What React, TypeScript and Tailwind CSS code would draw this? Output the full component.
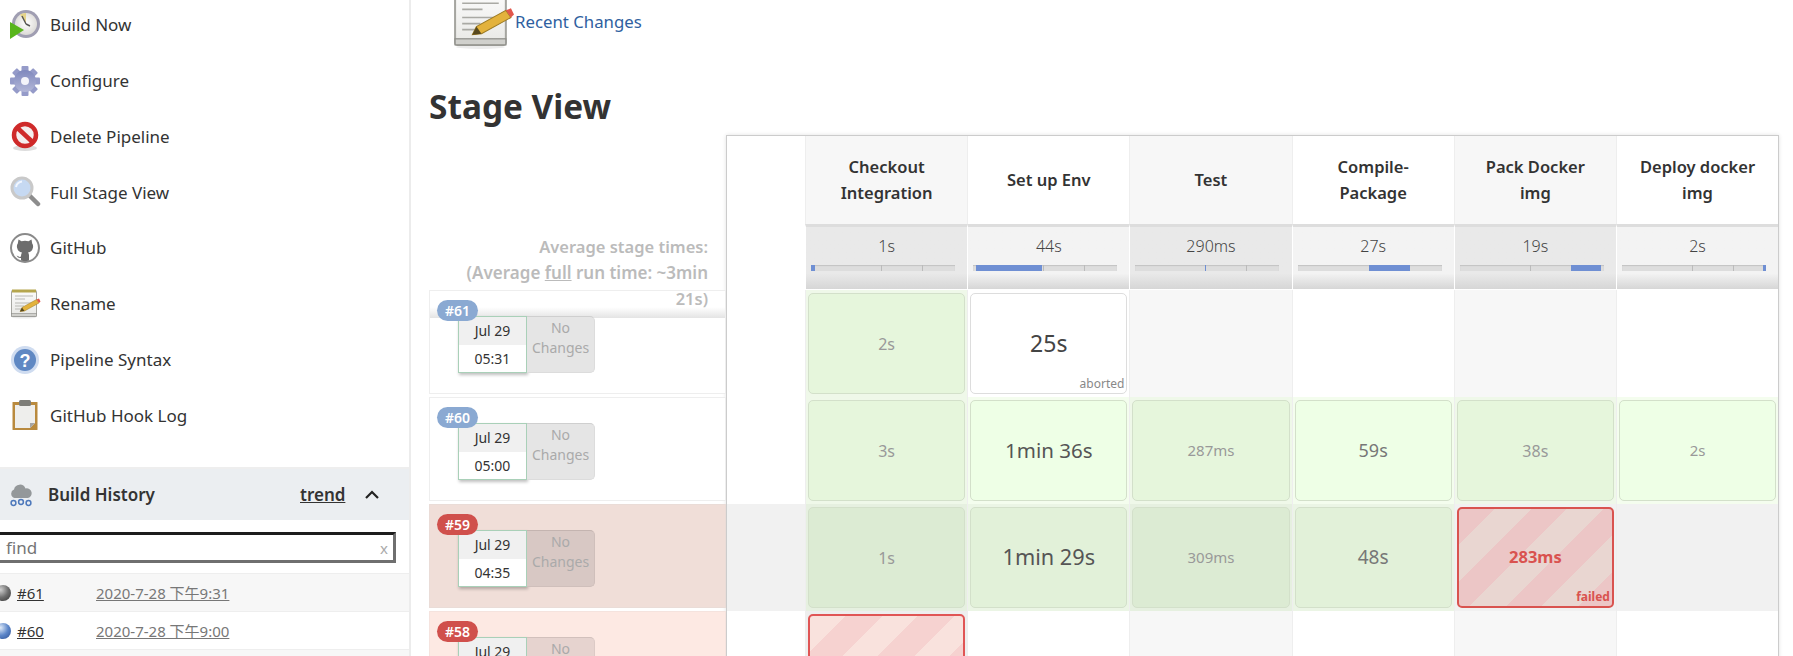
import React from 'react';

const Clock = () => (
  <svg width="32" height="32" viewBox="0 0 32 32">
    <defs>
      <radialGradient id="clockFace" cx="0.5" cy="0.45" r="0.6">
        <stop offset="0" stopColor="#ffffff" />
        <stop offset="1" stopColor="#d8d6d2" />
      </radialGradient>
    </defs>
    <circle cx="17" cy="15" r="14" fill="#a09eb2" />
    <circle cx="17" cy="15" r="11" fill="url(#clockFace)" />
    <path d="M17 15 L11 5.5 A11 11 0 0 1 17 4 Z" fill="#e5d48a" />
    <path d="M17 15 L13 7 M17 15 L21 17" stroke="#555" strokeWidth="1.4" />
    <path d="M1 13 L15 21 L1 30 Z" fill="#58b51c" />
  </svg>
);

const Gear = () => (
  <svg width="32" height="32" viewBox="0 0 32 32">
    <defs>
      <linearGradient id="gearFill" x1="0" y1="0" x2="0" y2="1">
        <stop offset="0" stopColor="#7f88bd" />
        <stop offset="1" stopColor="#b3b7d8" />
      </linearGradient>
    </defs>
    <g fill="url(#gearFill)">
      {[0, 45, 90, 135, 180, 225, 270, 315].map(a => (
        <rect key={a} x="12.5" y="1" width="7" height="9" rx="1" transform={`rotate(${a} 16 16)`} fill="#959bc9" />
      ))}
      <circle cx="16" cy="16" r="11" />
    </g>
    <circle cx="16" cy="16" r="4" fill="#f4f4fa" />
  </svg>
);

const NoEntry = () => (
  <svg width="32" height="32" viewBox="0 0 32 32">
    <ellipse cx="16" cy="28" rx="12" ry="3" fill="#ddd" />
    <circle cx="16" cy="15" r="11" fill="#f4eeee" stroke="#cf2a2a" strokeWidth="4.5" />
    <path d="M8 7.5 L24 22.5" stroke="#cf2a2a" strokeWidth="4.5" />
  </svg>
);

const Magnifier = () => (
  <svg width="32" height="32" viewBox="0 0 32 32">
    <path d="M20 19 L29 28" stroke="#8d8d8d" strokeWidth="4.5" strokeLinecap="round" />
    <circle cx="13" cy="12" r="10" fill="#c6d9f2" stroke="#c9c9c9" strokeWidth="3" />
    <path d="M7 11 A7 7 0 0 1 13 5.5" fill="none" stroke="#f2f7ff" strokeWidth="2" />
  </svg>
);

const GitHubMark = () => (
  <svg width="32" height="32" viewBox="0 0 32 32">
    <circle cx="16" cy="16" r="14" fill="#ffffff" stroke="#8a8a8a" strokeWidth="2" />
    <path
      d="M9.5 7.5 L12.5 9.2 Q16 8.4 19.5 9.2 L22.5 7.5 L23.2 11.5 Q24.4 13 24 15.5 Q23 20 19 20.6 Q20 21.6 20 23.5 L20 28.5 Q16 29.6 12 28.5 L12 26 Q9 26.5 7.5 23.5 Q9.5 24 10.5 25 L12 24.5 Q12 21.8 13 20.6 Q9 20 8 15.5 Q7.6 13 8.8 11.5 Z"
      fill="#6d6d6d"
    />
  </svg>
);

const Notepad = ({ size = 32, id }: { size?: number; id: string }) => (
  <svg width={size} height={size} viewBox="0 0 32 32" className="shrink-0">
    <defs>
      <linearGradient id={id} x1="0" y1="0" x2="0" y2="1">
        <stop offset="0" stopColor="#fbfbfb" />
        <stop offset="1" stopColor="#e8e8e5" />
      </linearGradient>
    </defs>
    <ellipse cx="15" cy="29.5" rx="12" ry="1" fill="#ececec" />
    <rect x="2.5" y="2.5" width="25" height="26" rx="1" fill={`url(#${id})`} stroke="#a5a5a0" />
    <rect x="2.5" y="25.5" width="25" height="3" fill="#d0d0cc" stroke="#8d8d88" strokeWidth="0.6" />
    <rect x="3" y="1.5" width="24" height="3" fill="#b5a64e" />
    <path d="M6 8 H24 M6 11 H16 M6 15 H24 M6 18 H15 M6 21 H13" stroke="#a9a9a4" strokeWidth="0.8" />
    <path d="M11 23.5 L13 19.5 L27.5 11.5 L30 15 L15.5 23 Z" fill="#e3b23c" stroke="#9c7a22" strokeWidth="0.5" />
    <path d="M27.5 11.5 L30 15 L31.5 13.5 L30 10.5 Z" fill="#e2574c" />
    <path d="M11 23.5 L13 19.5 L15.5 23 Z" fill="#57491f" />
  </svg>
);

const Help = () => (
  <svg width="32" height="32" viewBox="0 0 32 32">
    <circle cx="16" cy="16" r="14" fill="#cfdcf0" />
    <circle cx="16" cy="16" r="11" fill="#5f88c3" />
    <text x="16" y="22.5" textAnchor="middle" fontSize="18" fontWeight="700" fontFamily="'Liberation Sans', sans-serif" fill="#ffffff">
      ?
    </text>
  </svg>
);

const Clipboard = () => (
  <svg width="32" height="32" viewBox="0 0 32 32">
    <rect x="3.5" y="3" width="25" height="28" rx="0.5" fill="#b98a3e" />
    <path d="M6 6 H26 V24 L21 29 H6 Z" fill="#eeeeec" />
    <path d="M26 24 L21 29 V24 Z" fill="#a5a5a5" />
    <rect x="10" y="1" width="12" height="6" rx="1.5" fill="#7d7d78" />
  </svg>
);

const RainCloud = () => (
  <svg width="22" height="24" viewBox="0 0 22 24">
    <path d="M4.5 15 A4.5 4.5 0 0 1 4 6.5 A6 6 0 0 1 15.5 5.5 A4.8 4.8 0 0 1 18 15 Z" fill="#94989a" />
    <g fill="none" stroke="#4d78bb" strokeWidth="1.5">
      <circle cx="3.5" cy="20" r="2.4" />
      <circle cx="11" cy="19" r="2.4" />
      <circle cx="18.5" cy="20" r="2.4" />
    </g>
  </svg>
);

const Ball = ({ blue }: { blue?: boolean }) => (
  <span
    className={`-ml-[5px] h-[16px] w-[16px] shrink-0 rounded-full ${
      blue
        ? 'bg-[radial-gradient(circle_at_35%_30%,#dfeaf8,#5c86c9_50%,#2c4f93)]'
        : 'bg-[radial-gradient(circle_at_35%_30%,#cfcfcf,#6e6e6e_50%,#333333)]'
    }`}
  />
);

const tasks: { label: string; icon: React.ReactNode }[] = [
  { label: 'Build Now', icon: <Clock /> },
  { label: 'Configure', icon: <Gear /> },
  { label: 'Delete Pipeline', icon: <NoEntry /> },
  { label: 'Full Stage View', icon: <Magnifier /> },
  { label: 'GitHub', icon: <GitHubMark /> },
  { label: 'Rename', icon: <Notepad id="padSmall" /> },
  { label: 'Pipeline Syntax', icon: <Help /> },
  { label: 'GitHub Hook Log', icon: <Clipboard /> },
];

const Sidebar = () => (
  <aside className="h-[656px] w-[411px] shrink-0 overflow-hidden border-r-2 border-[#ececec]">
    <div className="-mt-[3px] mb-[24px]">
      {tasks.map(t => (
        <div key={t.label} className="flex h-[55.8px] items-center gap-[9px] pl-[9px] text-[17px] text-[#333]">
          {t.icon}
          <span>{t.label}</span>
        </div>
      ))}
    </div>
    <div className="border-t-2 border-[#eeeeee]" />
    <div className="flex h-[51px] items-center bg-[#ebeef1] pl-[10px] text-[17px] font-semibold text-[#333]">
      <RainCloud />
      <span className="ml-[16px] w-[252px]">Build History</span>
      <span className="underline">trend</span>
      <svg className="ml-[19px]" width="16" height="10" viewBox="0 0 16 10">
        <path d="M2 8 L8 2 L14 8" fill="none" stroke="#222" strokeWidth="2.2" />
      </svg>
    </div>
    <div className="mt-[12px] -ml-[4px] flex h-[31px] w-[400px] items-center justify-between border-[3px] border-t-[#1c1c1c] border-r-[#6f6f6f] border-b-[#6f6f6f] border-l-[#1c1c1c] bg-white pl-[7px] pr-[5px] text-[17px] text-[#757575]">
      <span>find</span>
      <span className="text-[15px] text-[#aaa]">x</span>
    </div>
    <div className="mt-[10px] flex h-[38px] items-center border-t border-[#eeeeee] bg-[#f7f7f7] text-[15px]">
      <Ball />
      <span className="ml-[6px] w-[79px] text-[#333] underline">#61</span>
      <span className="text-[#777] underline">2020-7-28 下午9:31</span>
    </div>
    <div className="flex h-[38px] items-center border-t border-[#eeeeee] bg-white text-[15px]">
      <Ball blue />
      <span className="ml-[6px] w-[79px] text-[#333] underline">#60</span>
      <span className="text-[#777] underline">2020-7-28 下午9:00</span>
    </div>
    <div className="h-[10px] border-t border-[#eeeeee] bg-[#f7f7f7]" />
  </aside>
);

const runs = [
  { id: '#61', time: '05:31', bg: 'bg-white border-[#eeeeee]', badge: 'bg-[#8aa9d2]', box: 'bg-[#e5e5e5] border-[#dcdcdc] border-t-[#cfcfcf]' },
  { id: '#60', time: '05:00', bg: 'bg-white border-[#eeeeee]', badge: 'bg-[#8aa9d2]', box: 'bg-[#e5e5e5] border-[#dcdcdc] border-t-[#cfcfcf]' },
  { id: '#59', time: '04:35', bg: 'bg-[#f0ded8] border-[#eadcd7]', badge: 'bg-[#d0504c]', box: 'bg-[#d8c8c4] border-[#cfbfbb] border-t-[#c4b4b0]' },
  { id: '#58', time: '04:20', bg: 'bg-[#fde9e3] border-[#f5e3de]', badge: 'bg-[#d0504c]', box: 'bg-[#e6d3cf] border-[#dccac6] border-t-[#d2c0bc]' },
];

const RunRow = ({ run, first }: { run: (typeof runs)[number]; first?: boolean }) => (
  <div className={`relative h-[104px] border pl-[28px] pt-[25px] ${run.bg} ${first ? '' : 'mt-[3px]'}`}>
    {first && <div className="absolute inset-x-0 top-0 h-[27px] bg-gradient-to-b from-white from-60% to-[#e4e4e4]" />}
    <div className="relative flex">
      <div className="h-[57px] w-[69px] border border-[#a9d0b8] bg-white text-center text-[14px] leading-[28px] text-[#333] shadow-[1px_2px_3px_rgba(0,0,0,0.25)]">
        <div className="bg-[#f0f0f0]">Jul 29</div>
        <div>{run.time}</div>
      </div>
      <div className={`h-[57px] w-[68px] rounded-r-[5px] border border-l-0 pt-[1px] text-center text-[14px] leading-[19.5px] text-[#aaaaaa] ${run.box}`}>
        No
        <br />
        Changes
      </div>
    </div>
    <span className={`absolute left-[7px] top-[9px] rounded-full px-[8px] text-[14px] font-semibold leading-[21px] text-white ${run.badge}`}>
      {run.id}
    </span>
  </div>
);

const stages = [
  { name: ['Checkout', 'Integration'], avg: '1s', blue: [0, 4], ticks: [70, 111] },
  { name: ['Set up Env'], avg: '44s', blue: [3, 66], ticks: [70, 111] },
  { name: ['Test'], avg: '290ms', blue: [70, 1], ticks: [111] },
  { name: ['Compile-', 'Package'], avg: '27s', blue: [71, 41], ticks: [111] },
  { name: ['Pack Docker', 'img'], avg: '19s', blue: [111, 30], ticks: [70] },
  { name: ['Deploy docker', 'img'], avg: '2s', blue: [141, 3], ticks: [70, 111] },
];

type Card = {
  text: string;
  size: string;
  color: string;
  bg: string;
  border?: string;
  note?: string;
  noteColor?: string;
  bold?: boolean;
  lift?: boolean;
} | null;

const grey = 'text-[#999]';
const mid = 'text-[#777]';
const dark = 'text-[#555]';
const stripes59 = 'bg-[repeating-linear-gradient(135deg,#ecc6c6_0,#ecc6c6_25px,#e9d6d1_25px,#e9d6d1_51px)]';
const stripes58 = 'bg-[repeating-linear-gradient(135deg,#f9e2dd_0,#f9e2dd_25px,#f6d2d0_25px,#f6d2d0_51px)]';

const rows: { band: string[]; cards: Card[] }[] = [
  {
    band: ['bg-white', 'bg-[#eff8e9]', 'bg-white', 'bg-[#f7f7f7]', 'bg-white', 'bg-[#f7f7f7]', 'bg-white'],
    cards: [
      { text: '2s', size: 'text-[16px]', color: grey, bg: 'bg-[#e6f6dc]' },
      { text: '25s', size: 'text-[23px]', color: 'text-[#444]', bg: 'bg-white', border: 'border-[#dddddd]', note: 'aborted', noteColor: 'text-[#888]' },
      null,
      null,
      null,
      null,
    ],
  },
  {
    band: ['bg-white', 'bg-[#eff8e9]', 'bg-[#f4fdee]', 'bg-[#eff8e9]', 'bg-[#f4fdee]', 'bg-[#eff8e9]', 'bg-[#f4fdee]'],
    cards: [
      { text: '3s', size: 'text-[16px]', color: grey, bg: 'bg-[#e6f6dc]' },
      { text: '1min 36s', size: 'text-[20.5px]', color: dark, bg: 'bg-[#eeffe6]' },
      { text: '287ms', size: 'text-[15px]', color: grey, bg: 'bg-[#e6f6dc]' },
      { text: '59s', size: 'text-[18px]', color: mid, bg: 'bg-[#eeffe6]' },
      { text: '38s', size: 'text-[16px]', color: grey, bg: 'bg-[#e6f6dc]' },
      { text: '2s', size: 'text-[15px]', color: grey, bg: 'bg-[#eeffe6]' },
    ],
  },
  {
    band: ['bg-[#f1f1f1]', 'bg-[#e6f0e0]', 'bg-[#ebf5e5]', 'bg-[#e6f0e0]', 'bg-[#ebf5e5]', 'bg-[#f1f1f1]', 'bg-[#f1f1f1]'],
    cards: [
      { text: '1s', size: 'text-[16px]', color: grey, bg: 'bg-[#dcebd3]' },
      { text: '1min 29s', size: 'text-[21.7px]', color: dark, bg: 'bg-[#e2f1d9]' },
      { text: '309ms', size: 'text-[15px]', color: grey, bg: 'bg-[#dcebd3]' },
      { text: '48s', size: 'text-[19px]', color: mid, bg: 'bg-[#e2f1d9]' },
      { text: '283ms', size: 'text-[16.5px]', color: 'text-[#d9534f]', bg: stripes59, border: 'border-2 border-[#d9534f]', note: 'failed', noteColor: 'text-[#d9534f] font-bold', bold: true },
      null,
    ],
  },
  {
    band: ['bg-white', 'bg-[#eeeeee]', 'bg-white', 'bg-[#f7f7f7]', 'bg-white', 'bg-[#f7f7f7]', 'bg-white'],
    cards: [
      { text: '738ms', size: 'text-[22px]', color: 'text-[#d9534f]', bg: stripes58, border: 'border-2 border-[#e05555]', bold: true, lift: true },
      null,
      null,
      null,
      null,
      null,
    ],
  },
];

const StageCard = ({ card }: { card: NonNullable<Card> }) => (
  <div
    className={`relative flex h-[101px] items-center justify-center rounded-[5px] border ${card.border ?? 'border-[#d3e0ca]'} ${card.bg} ${card.size} ${card.color} ${card.bold ? 'font-bold' : ''} ${card.lift ? 'pb-[4px]' : ''}`}
  >
    {card.text}
    {card.note && (
      <span className={`absolute bottom-[1px] right-[2px] text-[12px] leading-[16px] ${card.noteColor}`}>{card.note}</span>
    )}
  </div>
);

const StageTable = () => (
  <div className="w-[1053.2px] shrink-0 border-x border-t border-[#cccccc] bg-white shadow-[0_0_4px_rgba(0,0,0,0.12)]">
    <div className="flex h-[88px]">
      <div className="w-[78px] shrink-0" />
      {stages.map((s, i) => (
        <div
          key={s.avg}
          className={`flex w-[162.2px] shrink-0 items-center justify-center border-l border-[#eeeeee] text-center text-[16.5px] font-semibold leading-[26px] text-[#333] ${
            i % 2 === 0 ? 'bg-[#f7f7f7]' : 'bg-white'
          }`}
        >
          <div>
            {s.name.map(n => (
              <div key={n}>{n}</div>
            ))}
          </div>
        </div>
      ))}
    </div>
    <div className="flex h-[66px] pb-[1px]">
      <div className="w-[78px] shrink-0" />
      {stages.map((s, i) => (
        <div
          key={s.avg}
          className={`w-[162.2px] shrink-0 border-t-[3px] border-l border-t-[#dddddd] border-l-white px-[5px] text-center text-[16px] font-light leading-[20px] text-[#444] ${
            i % 2 === 0
              ? 'bg-gradient-to-b from-[#e9e9e9] from-75% to-[#d6d6d6]'
              : 'bg-gradient-to-b from-[#f3f3f3] from-75% to-[#d6d6d6]'
          }`}
        >
          <div className="pt-[9px]">{s.avg}</div>
          <div className="relative mt-[9px] h-[6px] w-[144px] bg-[#dddddd] shadow-[inset_0_1px_1px_rgba(0,0,0,0.12)]">
            {s.ticks.map(t => (
              <span key={t} className="absolute top-0 h-[6px] w-[1px] bg-[#bbbbbb]" style={{ left: t }} />
            ))}
            <span className="absolute top-0 h-[6px] bg-[#6f8fd3]" style={{ left: s.blue[0], width: s.blue[1] }} />
          </div>
        </div>
      ))}
    </div>
    {rows.map((row, r) => (
      <div key={r} className="flex h-[107px]">
        <div className={`w-[78px] shrink-0 ${row.band[0]}`} />
        {row.cards.map((card, c) => (
          <div key={c} className={`h-[107px] w-[162.2px] shrink-0 border-l border-[#eeeeee] px-[2px] pt-[3px] ${row.band[c + 1]}`}>
            {card && <StageCard card={card} />}
          </div>
        ))}
      </div>
    ))}
  </div>
);

export default function App() {
  return (
    <div className="flex h-[656px] w-[1793px] overflow-hidden bg-white font-['Noto_Sans','Noto_Sans_CJK_SC',sans-serif]">
      <Sidebar />
      <main className="pl-[18px]">
        <div className="flex h-[48px] items-start pl-[21px]">
          <div className="-mt-[13px]">
            <Notepad size={65} id="padLarge" />
          </div>
          <a className="pt-[10px] text-[16.8px] leading-[24px] text-[#2f5f9f]">Recent Changes</a>
        </div>
        <h1 className="mt-[38px] mb-[9px] text-[33.4px] font-bold leading-[40px] text-[#333]">Stage View</h1>
        <div className="flex">
          <div className="w-[297px] shrink-0">
            <div className="relative z-10 h-[155px] pr-[18px] pt-[99px] text-right text-[16.5px] font-semibold leading-[26px] text-[#bbbbbb]">
              Average stage times:
              <br />
              <span className="text-[17px]">
                (Average <span className="underline">full</span> run time: ~3min
              </span>
              <br />
              21s)
            </div>
            {runs.map((run, i) => (
              <RunRow key={run.id} run={run} first={i === 0} />
            ))}
          </div>
          <StageTable />
        </div>
      </main>
    </div>
  );
}
